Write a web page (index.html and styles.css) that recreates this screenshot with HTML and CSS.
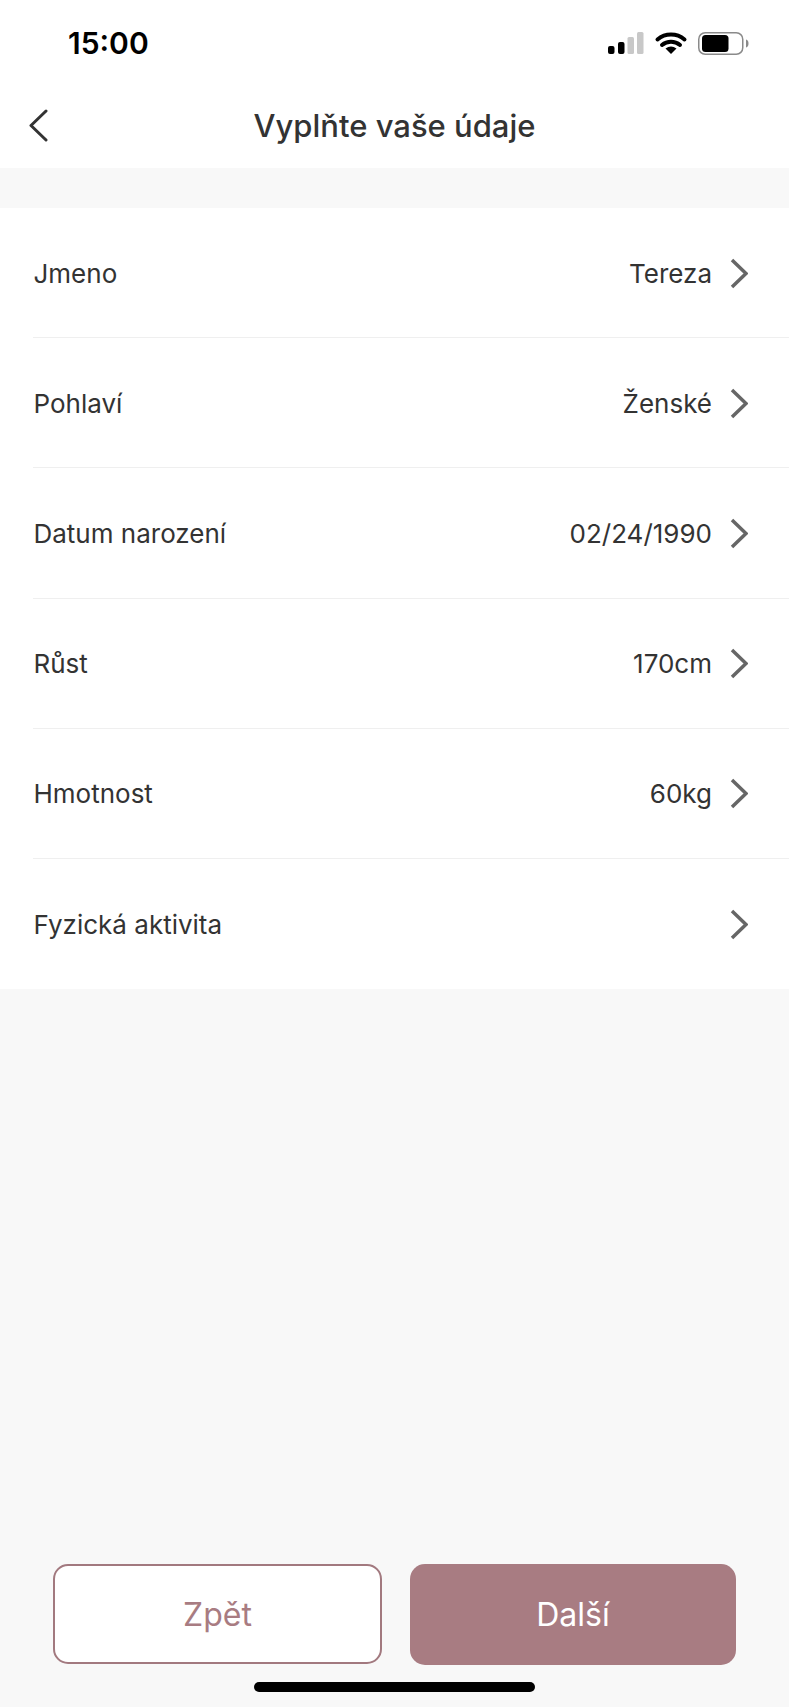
FILE: index.html
```html
<!DOCTYPE html>
<html lang="cs">
<head>
    <meta charset="UTF-8">
    <meta name="viewport" content="width=device-width, initial-scale=1.0">
    <title>Vyplňte vaše údaje</title>
    <link rel="stylesheet" href="styles.css">
</head>
<body>
    <div class="status-bar">
        <span class="time">15:00</span>
        <svg class="status-icons" width="141" height="24" viewBox="0 0 141 24">
            <!-- signal -->
            <rect x="0" y="14" width="6.5" height="8" rx="2" fill="#000"/>
            <rect x="10" y="10" width="6.5" height="12" rx="2" fill="#000"/>
            <rect x="19.5" y="5" width="6.5" height="17" rx="1.5" fill="#c8c8c8"/>
            <rect x="29" y="0" width="6.5" height="22" rx="1.5" fill="#c8c8c8"/>
            <!-- wifi -->
            <path d="M49.5 7.5a21 21 0 0 1 27 0M54 13a14 14 0 0 1 18 0" fill="none" stroke="#000" stroke-width="4" stroke-linecap="round"/>
            <path d="M57.5 16.5a9 9 0 0 1 11 0L63 22z" fill="#000"/>
            <!-- battery -->
            <rect x="90.75" y="0.75" width="44" height="21.5" rx="6.5" fill="none" stroke="#8a8a8a" stroke-width="1.5"/>
            <rect x="94" y="3" width="26.5" height="17" rx="3.5" fill="#000"/>
            <path d="M138 7.5c1.8.5 2.5 2 2.5 4s-.7 3.500-2.500 4z" fill="#8a8a8a"/>
        </svg>
    </div>

    <header class="nav-bar">
        <svg class="back-icon" width="20" height="33" viewBox="0 0 20 33">
            <path d="M18 2L3 16.500L18 31" fill="none" stroke="#333" stroke-width="3" stroke-linecap="round" stroke-linejoin="round"/>
        </svg>
        <h1>Vyplňte vaše údaje</h1>
    </header>

    <ul class="form-list">
        <li class="form-row">
            <span>Jmeno</span>
            <span class="value">Tereza</span>
            <svg class="chevron" width="18" height="31" viewBox="0 0 18 31"><path d="M2 2L16 15.500L2 29" /></svg>
        </li>
        <li class="form-row">
            <span>Pohlaví</span>
            <span class="value">Ženské</span>
            <svg class="chevron" width="18" height="31" viewBox="0 0 18 31"><path d="M2 2L16 15.500L2 29" /></svg>
        </li>
        <li class="form-row">
            <span>Datum narození</span>
            <span class="value">02/24/1990</span>
            <svg class="chevron" width="18" height="31" viewBox="0 0 18 31"><path d="M2 2L16 15.500L2 29" /></svg>
        </li>
        <li class="form-row">
            <span>Růst</span>
            <span class="value">170cm</span>
            <svg class="chevron" width="18" height="31" viewBox="0 0 18 31"><path d="M2 2L16 15.500L2 29" /></svg>
        </li>
        <li class="form-row">
            <span>Hmotnost</span>
            <span class="value">60kg</span>
            <svg class="chevron" width="18" height="31" viewBox="0 0 18 31"><path d="M2 2L16 15.500L2 29" /></svg>
        </li>
        <li class="form-row">
            <span>Fyzická aktivita</span>
            <span class="value"></span>
            <svg class="chevron" width="18" height="31" viewBox="0 0 18 31"><path d="M2 2L16 15.500L2 29" /></svg>
        </li>
    </ul>

    <footer class="actions">
        <button class="btn btn-outline" type="button">Zpět</button>
        <button class="btn btn-solid" type="button">Další</button>
    </footer>

    <div class="home-indicator"></div>
</body>
</html>
```

FILE: styles.css
```css
/* Basic reset */
* {
    margin: 0;
    padding: 0;
    box-sizing: border-box;
}

body {
    font-family: 'Inter', 'Liberation Sans', sans-serif;
    background: #f8f8f8;
    color: #333;
    width: 789px;
    height: 1707px;
    display: flex;
    flex-direction: column;
    overflow: hidden;
}

.status-bar {
    background: #fff;
    height: 84px;
    padding: 32px 40px 0 68px;
    display: flex;
    justify-content: space-between;
    align-items: flex-start;
}

.time {
    font-size: 30px;
    font-weight: 600;
    line-height: 23px;
    color: #000;
}

.nav-bar {
    background: #fff;
    height: 84px;
    margin-bottom: 40px;
    padding-bottom: 2px;
    display: flex;
    align-items: center;
    justify-content: center;
    position: relative;
}

.back-icon {
    position: absolute;
    left: 28px;
    top: 25px;
}

.nav-bar h1 {
    font-size: 31px;
    font-weight: 450;
    color: #333;
}

.form-list {
    list-style: none;
    background: #fff;
}

.form-row {
    height: 130.2px;
    margin-left: 33px;
    padding: 1px 41px 0 0.5px;
    display: flex;
    align-items: center;
    font-size: 26px;
    border-bottom: 1px solid #efefef;
}

.form-row:last-child {
    border-bottom: none;
}

.value {
    margin-left: auto;
    margin-right: 18px;
}

.chevron path {
    fill: none;
    stroke: #666;
    stroke-width: 3.5;
}

.actions {
    margin-top: auto;
    padding: 0 53px;
    display: flex;
    justify-content: space-between;
    align-items: flex-start;
}

.btn {
    font-family: inherit;
    font-size: 32px;
    border-radius: 15px;
}

.btn-outline {
    width: 329px;
    height: 100px;
    margin-bottom: 1px;
    background: #fff;
    color: #a87c82;
    border: 2px solid #a2797f;
}

.btn-solid {
    width: 326px;
    height: 101px;
    background: #a87c82;
    color: #fff;
    border: none;
}

.home-indicator {
    width: 281px;
    height: 10px;
    margin: 17px auto 15px;
    background: #000;
    border-radius: 5px;
}
```
